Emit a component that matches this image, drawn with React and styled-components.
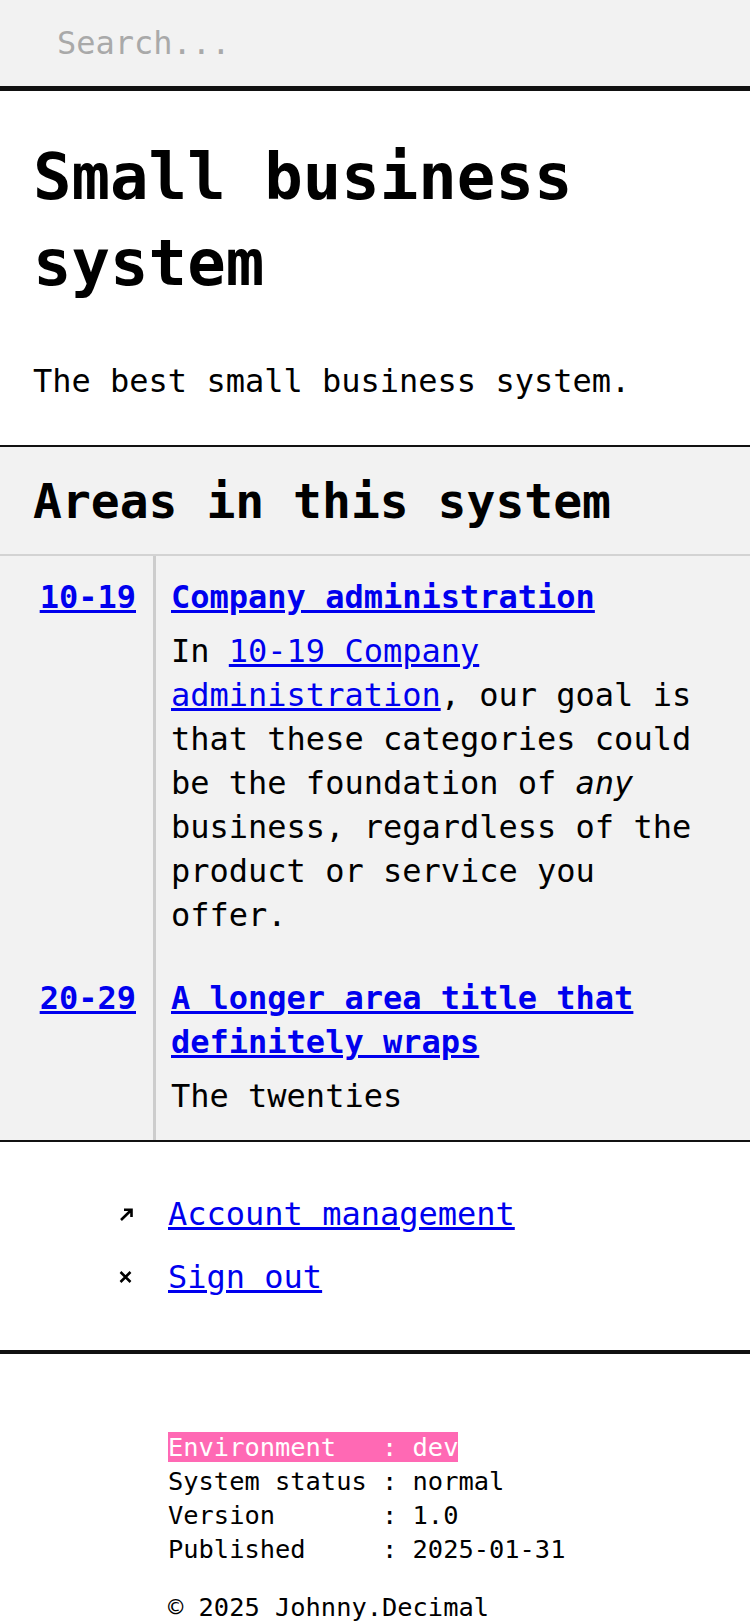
import React from "react";
import styled, { createGlobalStyle } from "styled-components";

const GlobalStyle = createGlobalStyle`
  html, body {
    margin: 0;
    padding: 0;
    background: #ffffff;
  }
  body {
    font-family: "DejaVu Sans Mono", "Liberation Mono", monospace;
    color: #000000;
  }
  * {
    box-sizing: border-box;
  }
`;

const Page = styled.div`
  width: 100%;
  min-height: 100vh;
  background: #ffffff;
`;

const SearchBar = styled.div`
  background: #f2f2f2;
  border-bottom: 5px solid #111111;
`;

const SearchInput = styled.input`
  display: block;
  width: 100%;
  height: 86px;
  padding: 0 57px;
  border: 0;
  outline: none;
  background: transparent;
  font-family: "DejaVu Sans Mono", monospace;
  font-size: 32px;
  color: #000000;
  &::placeholder {
    color: #a9a9a9;
  }
`;

const Header = styled.header`
  padding: 43px 33px 42px;
  border-bottom: 2px solid #111111;
`;

const Title = styled.h1`
  margin: 0;
  font-size: 64px;
  line-height: 86px;
  font-weight: 700;
`;

const Tagline = styled.p`
  margin: 53px 0 0;
  font-size: 32px;
  line-height: 44px;
`;

const Areas = styled.section`
  background: #f2f2f2;
  border-bottom: 2px solid #111111;
`;

const AreasHeading = styled.h2`
  margin: 0;
  padding: 26px 33px 25px;
  font-size: 48px;
  line-height: 56px;
  font-weight: 700;
  border-bottom: 2px solid #d3d3d3;
`;

const AreaRow = styled.div`
  display: grid;
  grid-template-columns: 156px 1fr;
  font-size: 32px;
  line-height: 44px;
  --row-bottom: 20px;
  &:last-child {
    --row-bottom: 22px;
  }
`;

const RangeCell = styled.div`
  padding: 19px 17px var(--row-bottom) 0;
  text-align: right;
  border-right: 3px solid #cdcdcd;
`;

const ContentCell = styled.div`
  padding: 19px 31px var(--row-bottom) 15px;
`;

const AreaText = styled.p`
  margin: 10px 0 0;
`;

const Link = styled.a`
  color: #0000ee;
  text-decoration: underline;
  font-weight: ${({ $bold }) => ($bold ? 700 : 400)};
`;

const AccountLinks = styled.ul`
  list-style: none;
  margin: 0;
  padding: 50px 0 51px 119px;
  display: flex;
  flex-direction: column;
  gap: 19px;
  border-bottom: 4px solid #111111;
`;

const LinkItem = styled.li`
  display: flex;
  align-items: center;
  font-size: 32px;
  line-height: 44px;
`;

const Marker = styled.span`
  display: flex;
  align-items: center;
  width: 49px;
  flex-shrink: 0;
`;

const Footer = styled.footer`
  padding: 76px 0 40px 168px;
  font-size: 25.4px;
  line-height: 34px;
`;

const Status = styled.div`
  white-space: pre;
`;

const StatusLine = styled.div``;

const Env = styled.span`
  background: #ff69b4;
  color: #ffffff;
`;

const Copyright = styled.p`
  margin: 24px 0 0;
`;

const areas = [
  {
    range: "10-19",
    title: "Company administration",
    body: (
      <>
        In <Link href="#10-19">10-19 Company administration</Link>, our goal is
        that these categories could be the foundation of <em>any</em> business,
        regardless of the product or service you offer.
      </>
    ),
  },
  {
    range: "20-29",
    title: "A longer area title that definitely wraps",
    body: "The twenties",
  },
];

const status = [
  ["Environment", "dev", true],
  ["System status", "normal"],
  ["Version", "1.0"],
  ["Published", "2025-01-31"],
];

const ArrowIcon = () => (
  <svg width="15" height="13" viewBox="0 0 15 13" fill="none">
    <path d="M2 12 L12.5 1.8 M5 1.8 H12.5 V9" stroke="#000" strokeWidth="2.6" />
  </svg>
);

const CrossIcon = () => (
  <svg width="13" height="12" viewBox="0 0 13 12" fill="none">
    <path d="M1.5 1 L11.5 11 M11.5 1 L1.5 11" stroke="#000" strokeWidth="2.5" />
  </svg>
);

const App = () => {
  return (
    <Page>
      <GlobalStyle />
      <SearchBar>
        <SearchInput type="text" placeholder="Search..." />
      </SearchBar>

      <Header>
        <Title>Small business system</Title>
        <Tagline>The best small business system.</Tagline>
      </Header>

      <Areas>
        <AreasHeading>Areas in this system</AreasHeading>
        {areas.map((area) => (
          <AreaRow key={area.range}>
            <RangeCell>
              <Link href={"#" + area.range} $bold>
                {area.range}
              </Link>
            </RangeCell>
            <ContentCell>
              <Link href={"#" + area.range} $bold>
                {area.title}
              </Link>
              <AreaText>{area.body}</AreaText>
            </ContentCell>
          </AreaRow>
        ))}
      </Areas>

      <AccountLinks>
        <LinkItem>
          <Marker>
            <ArrowIcon />
          </Marker>
          <Link href="#account">Account management</Link>
        </LinkItem>
        <LinkItem>
          <Marker>
            <CrossIcon />
          </Marker>
          <Link href="#signout">Sign out</Link>
        </LinkItem>
      </AccountLinks>

      <Footer>
        <Status>
          {status.map(([label, value, highlight]) => {
            const line = label.padEnd(14, " ") + ": " + value;
            return (
              <StatusLine key={label}>
                {highlight ? <Env>{line}</Env> : line}
              </StatusLine>
            );
          })}
        </Status>
        <Copyright>© 2025 Johnny.Decimal</Copyright>
      </Footer>
    </Page>
  );
};

export default App;
